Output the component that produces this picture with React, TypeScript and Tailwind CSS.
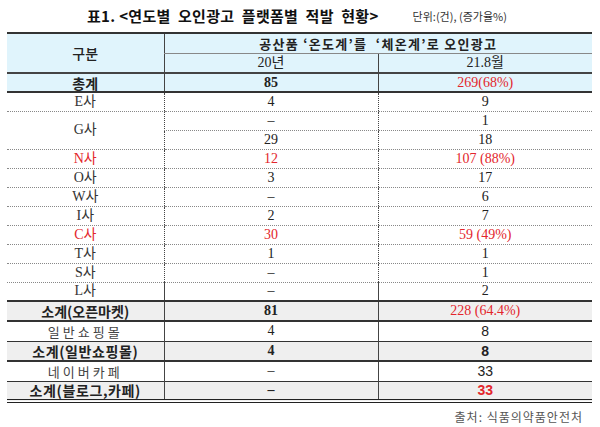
import React from 'react'

const serif = "font-['Liberation_Serif','Noto_Sans_CJK_KR',serif]"
const sans = "font-['Liberation_Sans','Noto_Sans_CJK_KR',sans-serif]"
const kr = "font-['Noto_Sans_CJK_KR',sans-serif]"

type Row = {
  label?: string
  span?: number
  a: string
  b: string
  red?: boolean
  last?: boolean
}

const companies: Row[] = [
  { label: 'E사', a: '4', b: '9' },
  { label: 'G사', span: 2, a: '–', b: '1' },
  { a: '29', b: '18' },
  { label: 'N사', a: '12', b: '107 (88%)', red: true },
  { label: 'O사', a: '3', b: '17' },
  { label: 'W사', a: '–', b: '6' },
  { label: 'I사', a: '2', b: '7' },
  { label: 'C사', a: '30', b: '59 (49%)', red: true },
  { label: 'T사', a: '1', b: '1' },
  { label: 'S사', a: '–', b: '1' },
  { label: 'L사', a: '–', b: '2', last: true },
]

export default function App() {
  return (
    <div className="w-[600px] h-[427px] bg-white text-[#222]">
      <div className="h-[32px] flex items-center pl-[87px]">
        <h1 className={`${kr} text-[15px] font-bold tracking-[0.3px] text-[#111]`}>
          표1. &lt;연도별&nbsp; 오인광고&nbsp; 플랫폼별&nbsp; 적발&nbsp; 현황&gt;
        </h1>
        <span className={`${kr} ml-[34px] text-[11px] text-[#333]`}>단위:(건), (증가율%)</span>
      </div>

      <table className="ml-[7px] w-[585px] table-fixed border-collapse">
        <colgroup>
          <col className="w-[157px]" />
          <col className="w-[214px]" />
          <col className="w-[214px]" />
        </colgroup>
        <tbody className="text-center">
          {/* header */}
          <tr className="bg-[#e0f4fc] border-t-2 border-[#333]">
            <td rowSpan={2} className={`${kr} p-0 text-[14px] font-medium text-[#222] border-b-2 border-b-[#444]`}>
              구분
            </td>
            <td colSpan={2} className={`${kr} h-[20px] p-0 text-[13px] font-bold tracking-[1.3px] leading-none border-l border-l-[#444] border-b border-b-[#888]`}>
              공산품 ‘온도계’를&nbsp; ‘체온계’로 오인광고
            </td>
          </tr>
          <tr className="bg-[#e0f4fc]">
            <td className={`${serif} h-[20px] p-0 text-[14px] leading-none border-l border-l-[#444] border-b-2 border-b-[#444]`}>20년</td>
            <td className={`${serif} h-[20px] p-0 text-[14px] leading-none border-l border-l-[#444] border-b-2 border-b-[#444]`}>21.8월</td>
          </tr>

          {/* total */}
          <tr className="bg-[#e0f4fc] border-b-2 border-b-[#333]">
            <td className={`${kr} h-[19px] p-0 text-[14px] font-bold leading-none`}>총계</td>
            <td className={`${serif} p-0 text-[14px] font-bold leading-none border-l border-l-[#444]`}>85</td>
            <td className={`${serif} p-0 text-[14px] leading-none text-[#e3262c] border-l border-l-[#444]`}>269(68%)</td>
          </tr>

          {companies.map((r, i) => {
            const line = r.last ? 'border-b-2 border-b-[#333]' : 'border-b border-dotted border-b-[#888]'
            return (
              <tr key={i}>
                {r.label && (
                  <td
                    rowSpan={r.span}
                    className={`${serif} p-0 text-[14px] leading-none ${r.red ? 'text-[#e3262c]' : 'text-[#333]'} ${line}`}
                  >
                    {r.label}
                  </td>
                )}
                <td className={`${serif} h-[19px] p-0 text-[14px] leading-none border-l border-l-[#444] ${r.red ? 'text-[#e3262c]' : ''} ${line}`}>
                  {r.a}
                </td>
                <td className={`${serif} p-0 text-[14px] leading-none border-l border-l-[#444] ${r.red ? 'text-[#e3262c]' : ''} ${line}`}>
                  {r.b}
                </td>
              </tr>
            )
          })}

          {/* open market subtotal */}
          <tr className="bg-[#efefef] border-b-2 border-b-[#333]">
            <td className={`${kr} h-[20px] p-0 text-[14px] font-bold leading-none`}>소계(오픈마켓)</td>
            <td className={`${serif} p-0 text-[14px] font-bold leading-none border-l border-l-[#444]`}>81</td>
            <td className={`${serif} p-0 text-[14px] leading-none text-[#e3262c] border-l border-l-[#444]`}>228 (64.4%)</td>
          </tr>

          <tr className="border-b border-b-[#333]">
            <td className={`${kr} h-[20px] p-0 text-[13px] tracking-[3px] leading-none text-[#444]`}>일반쇼핑몰</td>
            <td className={`${serif} p-0 text-[14px] leading-none border-l border-l-[#444]`}>4</td>
            <td className={`${sans} p-0 text-[14px] leading-none border-l border-l-[#444]`}>8</td>
          </tr>

          <tr className="bg-[#efefef] border-b-2 border-b-[#333]">
            <td className={`${kr} h-[20px] p-0 text-[14px] font-bold tracking-[0.6px] leading-none`}>소계(일반쇼핑몰)</td>
            <td className={`${serif} p-0 text-[14px] font-bold leading-none border-l border-l-[#444]`}>4</td>
            <td className={`${sans} p-0 text-[14px] font-bold leading-none border-l border-l-[#444]`}>8</td>
          </tr>

          <tr className="border-b border-b-[#333]">
            <td className={`${kr} h-[20px] p-0 text-[13px] tracking-[3px] leading-none text-[#444]`}>네이버카페</td>
            <td className={`${serif} p-0 text-[14px] leading-none border-l border-l-[#444]`}>–</td>
            <td className={`${sans} p-0 text-[14px] leading-none border-l border-l-[#444]`}>33</td>
          </tr>

          <tr className="bg-[#efefef] border-b-4 border-double border-b-[#222]">
            <td className={`${kr} h-[20px] p-0 text-[14px] font-bold tracking-[0.6px] leading-none`}>소계(블로그,카페)</td>
            <td className={`${serif} p-0 text-[14px] font-bold leading-none border-l border-l-[#444]`}>–</td>
            <td className={`${sans} p-0 text-[14px] font-bold leading-none text-[#e3262c] border-l border-l-[#444]`}>33</td>
          </tr>
        </tbody>
      </table>

      <div className="w-[583px] flex justify-end pt-[5px]">
        <span className={`${kr} text-[12px] tracking-[1px] text-[#555]`}>출처: 식품의약품안전처</span>
      </div>
    </div>
  )
}
